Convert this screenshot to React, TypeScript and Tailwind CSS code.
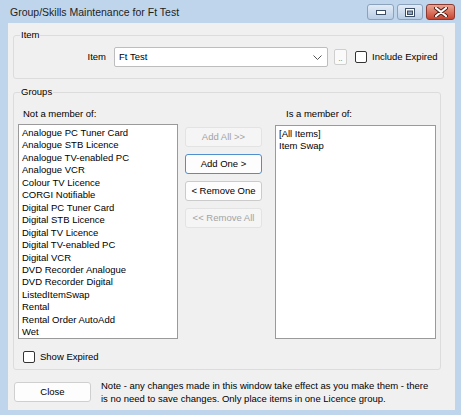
import React from 'react';

const NOT_MEMBER = [
  'Analogue PC Tuner Card',
  'Analogue STB Licence',
  'Analogue TV-enabled PC',
  'Analogue VCR',
  'Colour TV Licence',
  'CORGI Notifiable',
  'Digital PC Tuner Card',
  'Digital STB Licence',
  'Digital TV Licence',
  'Digital TV-enabled PC',
  'Digital VCR',
  'DVD Recorder Analogue',
  'DVD Recorder Digital',
  'ListedItemSwap',
  'Rental',
  'Rental Order AutoAdd',
  'Wet',
];

const MEMBER = ['[All Items]', 'Item Swap'];

const CheckBox = () => (
  <span className="block w-[12px] h-[12px] rounded-[2px] border border-[#333333] bg-white shrink-0" />
);

const MoveButton = ({ label, disabled, focused }: { label: string; disabled?: boolean; focused?: boolean }) => (
  <button
    disabled={disabled}
    className={
      'h-[20px] w-[77px] rounded-[3px] border text-center leading-[18px] ' +
      (disabled
        ? 'border-[#e3e3e3] bg-[#f5f5f5] text-[#a3a3a3]'
        : focused
          ? 'border-[#4f8fd0] bg-[#fdfdfd] text-black'
          : 'border-[#cbcbcb] bg-[#fdfdfd] text-black')
    }
  >
    {label}
  </button>
);

const App = () => {
  return (
    <div className="w-[461px] h-[415px] bg-[#bfd5ec] flex flex-col font-['Liberation_Sans',Arial,sans-serif] text-[9.5px] text-black overflow-hidden">
      {/* title bar */}
      <div className="h-[23px] flex items-start shrink-0">
        <span className="pl-[10px] pt-[6px] text-[10.5px] leading-[13px] text-[#1e1e1e] flex-1">
          Group/Skills Maintenance for Ft Test
        </span>
        <div className="flex gap-[3px] mt-[4px] mr-[6px]">
          <div className="w-[27px] h-[16px] rounded-[3px] border border-[#8ba2bd] bg-gradient-to-b from-[#e3ecf7] to-[#b9cde5] flex items-center justify-center">
            <svg width="10" height="5" viewBox="0 0 10 5">
              <rect x="0.5" y="0.5" width="9" height="4" fill="#ffffff" stroke="#3c4d66" />
            </svg>
          </div>
          <div className="w-[26px] h-[16px] rounded-[3px] border border-[#8ba2bd] bg-gradient-to-b from-[#e3ecf7] to-[#b9cde5] flex items-center justify-center">
            <svg width="10" height="9" viewBox="0 0 10 9">
              <rect x="0.5" y="0.5" width="9" height="8" fill="#ffffff" stroke="#3c4d66" />
              <rect x="2.5" y="3" width="5" height="3.5" fill="#8fa3bd" stroke="#3c4d66" />
            </svg>
          </div>
          <div className="w-[29px] h-[16px] rounded-[3px] border border-[#8b3a32] bg-gradient-to-b from-[#e9a493] to-[#c7432f] flex items-center justify-center">
            <svg width="14" height="10" viewBox="0 0 14 10">
              <path d="M2 1 L12 9 M12 1 L2 9" stroke="#4a1a14" strokeWidth="4" strokeLinecap="round" />
              <path d="M2 1 L12 9 M12 1 L2 9" stroke="#ffffff" strokeWidth="2.2" strokeLinecap="round" />
            </svg>
          </div>
        </div>
      </div>

      {/* client */}
      <div className="ml-[8px] mr-[6px] mb-[5px] flex-1 bg-[#f0f0f0] flex flex-col">
        {/* Item group */}
        <div className="relative ml-[5px] mt-[12px] w-[431px] h-[44px] rounded-[3px] border border-[#dcdcdc]">
          <span className="absolute left-[6px] top-[-7px] px-[1px] bg-[#f0f0f0] leading-[12px]">Item</span>
          <div className="flex items-center pt-[11px]">
            <span className="w-[92px] text-right">Item</span>
            <div className="ml-[8px] w-[214px] h-[20px] rounded-[2px] border border-[#bdbdbd] bg-white flex items-center pl-[4px] pr-[5px]">
              <span className="flex-1">Ft Test</span>
              <svg width="9" height="5" viewBox="0 0 9 5">
                <path d="M0.5 0.5 L4.5 4.5 L8.5 0.5" fill="none" stroke="#555555" strokeWidth="1" />
              </svg>
            </div>
            <div className="ml-[6px] w-[13px] h-[16px] rounded-[2px] border border-[#cfcfcf] bg-[#fafafa] flex items-end justify-center pb-[2px] text-[7px] leading-[7px] text-[#555555]">
              ..
            </div>
            <div className="ml-[8px] flex items-center gap-[5px]">
              <CheckBox />
              <span>Include Expired</span>
            </div>
          </div>
        </div>

        {/* Groups */}
        <div className="relative ml-[5px] mt-[13px] w-[428px] h-[278px] rounded-[3px] border border-[#dcdcdc]">
          <span className="absolute left-[6px] top-[-7px] px-[1px] bg-[#f0f0f0] leading-[12px]">Groups</span>
          <div className="flex pt-[15px]">
            <div className="ml-[4px] w-[160px] flex flex-col">
              <span className="pl-[5px] leading-[12px]">Not a member of:</span>
              <div className="mt-[4px] h-[215px] border border-[#9a9a9a] bg-white pl-[3px] pt-[2px] leading-[12.45px]">
                {NOT_MEMBER.map(item => (
                  <div key={item} className="whitespace-nowrap">{item}</div>
                ))}
              </div>
            </div>
            <div className="ml-[7px] mt-[19px] flex flex-col gap-[7px]">
              <MoveButton label="Add All >>" disabled />
              <MoveButton label="Add One >" focused />
              <MoveButton label="< Remove One" />
              <MoveButton label="<< Remove All" disabled />
            </div>
            <div className="ml-[13px] w-[161px] flex flex-col">
              <span className="pl-[11px] leading-[12px]">Is a member of:</span>
              <div className="mt-[5px] h-[214px] border border-[#9a9a9a] bg-white pl-[3px] pt-[2px] leading-[12.45px]">
                {MEMBER.map(item => (
                  <div key={item} className="whitespace-nowrap">{item}</div>
                ))}
              </div>
            </div>
          </div>
          <div className="ml-[9px] mt-[11px] flex items-center gap-[5px]">
            <CheckBox />
            <span>Show Expired</span>
          </div>
        </div>

        {/* footer */}
        <div className="mt-[9px] ml-[6px] flex items-center">
          <button className="w-[77px] h-[20px] rounded-[3px] border border-[#cfcfcf] bg-[#fdfdfd] leading-[18px]">
            Close
          </button>
          <p className="ml-[10px] leading-[13px] whitespace-nowrap">
            Note - any changes made in this window take effect as you make them - there
            <br />
            is no need to save changes. Only place items in one Licence group.
          </p>
        </div>
      </div>
    </div>
  );
};

export default App;
